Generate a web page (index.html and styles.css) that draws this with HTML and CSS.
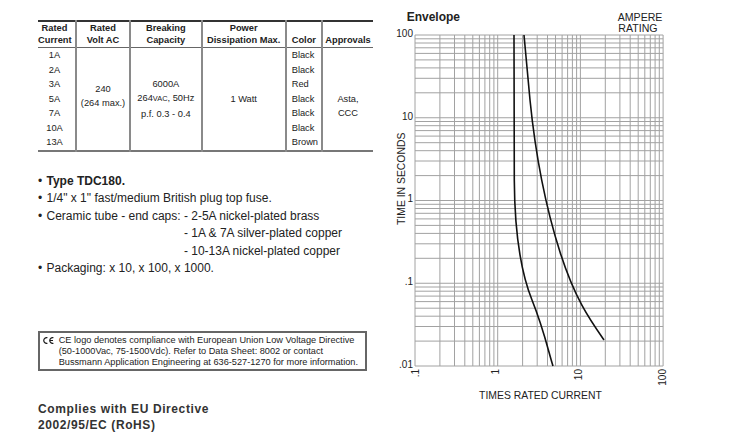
FILE: index.html
```html
<!DOCTYPE html>
<html>
<head>
<meta charset="utf-8">
<title>TDC180 fuse</title>
<link rel="stylesheet" href="styles.css">
</head>
<body>
<div class="page">
  <div class="left">
    <table class="spec">
      <colgroup>
        <col class="w1"><col class="w2"><col class="w3"><col class="w4"><col class="w5"><col class="w6">
      </colgroup>
      <thead>
        <tr>
          <th class="cur">Rated<br>Current</th>
          <th>Rated<br>Volt AC</th>
          <th>Breaking<br>Capacity</th>
          <th>Power<br>Dissipation Max.</th>
          <th>Color</th>
          <th>Approvals</th>
        </tr>
      </thead>
      <tbody>
        <tr>
          <td class="cur">1A</td>
          <td rowspan="7" class="volt">240<br>(264 max.)</td>
          <td rowspan="7">6000A<br>264<span class="sc">VAC</span>, 50Hz<br>p.f. 0.3 - 0.4</td>
          <td rowspan="7">1 Watt</td>
          <td class="color">Black</td>
          <td rowspan="7" class="appr">Asta,<br>CCC</td>
        </tr>
        <tr><td class="cur">2A</td><td class="color">Black</td></tr>
        <tr><td class="cur">3A</td><td class="color">Red</td></tr>
        <tr><td class="cur">5A</td><td class="color">Black</td></tr>
        <tr><td class="cur">7A</td><td class="color">Black</td></tr>
        <tr><td class="cur">10A</td><td class="color">Black</td></tr>
        <tr><td class="cur">13A</td><td class="color">Brown</td></tr>
      </tbody>
    </table>

    <div class="bullets">
      <div class="li"><span class="dot">•</span><b>Type TDC180.</b></div>
      <div class="li"><span class="dot">•</span><span>1/4" x 1" fast/medium British plug top fuse.</span></div>
      <div class="li"><span class="dot">•</span><span class="lbl">Ceramic tube - end caps:&nbsp;</span>
        <div class="sub">
          <div>- 2-5A nickel-plated brass</div>
          <div>- 1A &amp; 7A silver-plated copper</div>
          <div>- 10-13A nickel-plated copper</div>
        </div>
      </div>
      <div class="li"><span class="dot">•</span><span>Packaging: x 10, x 100, x 1000.</span></div>
    </div>

    <div class="ce">
      <svg class="ce-mark" viewBox="0 0 11 7" width="11" height="7">
        <path d="M4.4 0.7 A2.9 2.9 0 1 0 4.4 6.3 M10.4 0.7 A2.9 2.9 0 1 0 10.4 6.3 M7.4 3.5 H10" fill="none" stroke="#1a1a1a" stroke-width="1.2"/>
      </svg>
      <div class="ce-text">CE logo denotes compliance with European Union Low Voltage Directive<br>(50-1000Vac, 75-1500Vdc). Refer to Data Sheet: 8002 or contact<br>Bussmann Application Engineering at 636-527-1270 for more information.</div>
    </div>

    <div class="rohs">Complies with EU Directive<br>2002/95/EC (RoHS)</div>
  </div>

  <svg class="chart" viewBox="380 0 310 442" width="310" height="442">
    <text class="ctitle" x="406.7" y="20.7">Envelope</text>
    <text class="amp" x="617.7" y="20.7">AMPERE</text>
    <text class="amp" x="618.3" y="31.7">RATING</text>

    <path class="grid" d="M415 35V366M439.9 35V366M454.5 35V366M464.8 35V366M472.8 35V366M479.4 35V366M484.9 35V366M489.7 35V366M493.9 35V366M497.7 35V366M522.6 35V366M537.2 35V366M547.5 35V366M555.5 35V366M562.1 35V366M567.6 35V366M572.4 35V366M576.6 35V366M580.4 35V366M605.3 35V366M619.9 35V366M630.2 35V366M638.2 35V366M644.8 35V366M650.3 35V366M655.1 35V366M659.3 35V366M663.1 35V366"/>
    <path class="grid" d="M415 35H663.1M415 38.8H663.1M415 43H663.1M415 47.8H663.1M415 53.4H663.1M415 59.9H663.1M415 67.9H663.1M415 78.3H663.1M415 92.8H663.1M415 117.75H663.1M415 121.5H663.1M415 125.7H663.1M415 130.6H663.1M415 136.1H663.1M415 142.7H663.1M415 150.7H663.1M415 161H663.1M415 175.6H663.1M415 200.5H663.1M415 204.3H663.1M415 208.5H663.1M415 213.3H663.1M415 218.9H663.1M415 225.4H663.1M415 233.4H663.1M415 243.8H663.1M415 258.3H663.1M415 283.25H663.1M415 287H663.1M415 291.2H663.1M415 296.1H663.1M415 301.6H663.1M415 308.2H663.1M415 316.2H663.1M415 326.5H663.1M415 341.1H663.1M415 366H663.1"/>

    <path class="curve" d="M514 35 L514.3 180 C514.6 230 520 270 532 300 S548 350 553 366"/>
    <path class="curve" d="M524 35 L530 100 C536 160 545 205 560 252 S590 320 604 340"/>

    <text class="ylab" x="413" y="37">100</text>
    <text class="ylab" x="413" y="119.5">10</text>
    <text class="ylab" x="413" y="202">1</text>
    <text class="ylab" x="413" y="284.8">.1</text>
    <text class="ylab" x="413" y="367.5">.01</text>

    <text class="xlab" transform="translate(418.6 369) rotate(-90)">.1</text>
    <text class="xlab" transform="translate(499.2 369) rotate(-90)">1</text>
    <text class="xlab" transform="translate(581.8 369) rotate(-90)">10</text>
    <text class="xlab" transform="translate(665.6 369) rotate(-90)">100</text>

    <text class="atitle" x="540.5" y="399.3" text-anchor="middle">TIMES RATED CURRENT</text>
    <text class="atitle" transform="translate(405 225) rotate(-90)">TIME IN SECONDS</text>
  </svg>
</div>
</body>
</html>
```

FILE: styles.css
```css
body {
  margin: 0;
  background: #ffffff;
  font-family: "Liberation Sans", Arial, sans-serif;
  color: #222222;
}

.page {
  display: flex;
  width: 750px;
  height: 442px;
  overflow: hidden;
}

.left {
  flex: none;
  width: 380px;
  box-sizing: border-box;
  padding: 20px 0 0 38px;
}

/* spec table */
.spec {
  border-collapse: collapse;
  table-layout: fixed;
  width: 335px;
  font-size: 9.3px;
  border-top: 2px solid #333333;
  border-bottom: 2px solid #777777;
}

.w1 { width: 38px; }
.w2 { width: 54px; }
.w3 { width: 71.7px; }
.w4 { width: 84px; }
.w5 { width: 36.3px; }
.w6 { width: 51px; }

.spec th {
  font-weight: bold;
  line-height: 11.5px;
  height: 24px;
  padding: 0 0 1px;
  vertical-align: bottom;
  text-align: center;
  border-bottom: 1px solid #666666;
  border-left: 2px solid #8a8a8a;
}

.spec td {
  line-height: 14.5px;
  padding: 0;
  text-align: center;
  vertical-align: middle;
  border-left: 2px solid #8a8a8a;
}

.spec .cur {
  border-left: none;
  padding-right: 4px;
}

.spec td.color {
  text-align: left;
  padding-left: 5px;
}

.spec td.volt {
  padding-bottom: 5px;
}

.spec td.appr {
  padding-top: 14.5px;
}

.sc {
  font-size: 7.4px;
}

/* bullets */
.bullets {
  margin-top: 21px;
  font-size: 12px;
  line-height: 17.5px;
}

.li {
  display: flex;
}

.dot {
  flex: none;
  width: 8.5px;
}

.lbl {
  flex: none;
}

/* CE box */
.ce {
  display: flex;
  align-items: flex-start;
  margin-top: 53.5px;
  width: 329px;
  box-sizing: border-box;
  border: 2px solid #666666;
  padding: 2px 0 2px 2.7px;
  font-size: 9.2px;
  line-height: 10.8px;
}

.ce-mark {
  flex: none;
  margin: 2.2px 5px 0 0;
  width: 11px;
  height: 7px;
}

.rohs {
  margin-top: 30px;
  font-size: 12px;
  font-weight: bold;
  line-height: 16px;
  letter-spacing: 0.6px;
  color: #333333;
}

/* chart */
.chart {
  flex: none;
  display: block;
}

.chart text {
  font-family: "Liberation Sans", Arial, sans-serif;
  fill: #222222;
}

.grid {
  fill: none;
  stroke: #a2a2a2;
  stroke-width: 1;
}

.curve {
  fill: none;
  stroke: #111111;
  stroke-width: 1.6;
}

.ctitle {
  font-size: 12px;
  font-weight: bold;
}

.amp {
  font-size: 10.6px;
}

.ylab {
  font-size: 10px;
  text-anchor: end;
}

.xlab {
  font-size: 10px;
  text-anchor: end;
}

.atitle {
  font-size: 10.4px;
}
```
